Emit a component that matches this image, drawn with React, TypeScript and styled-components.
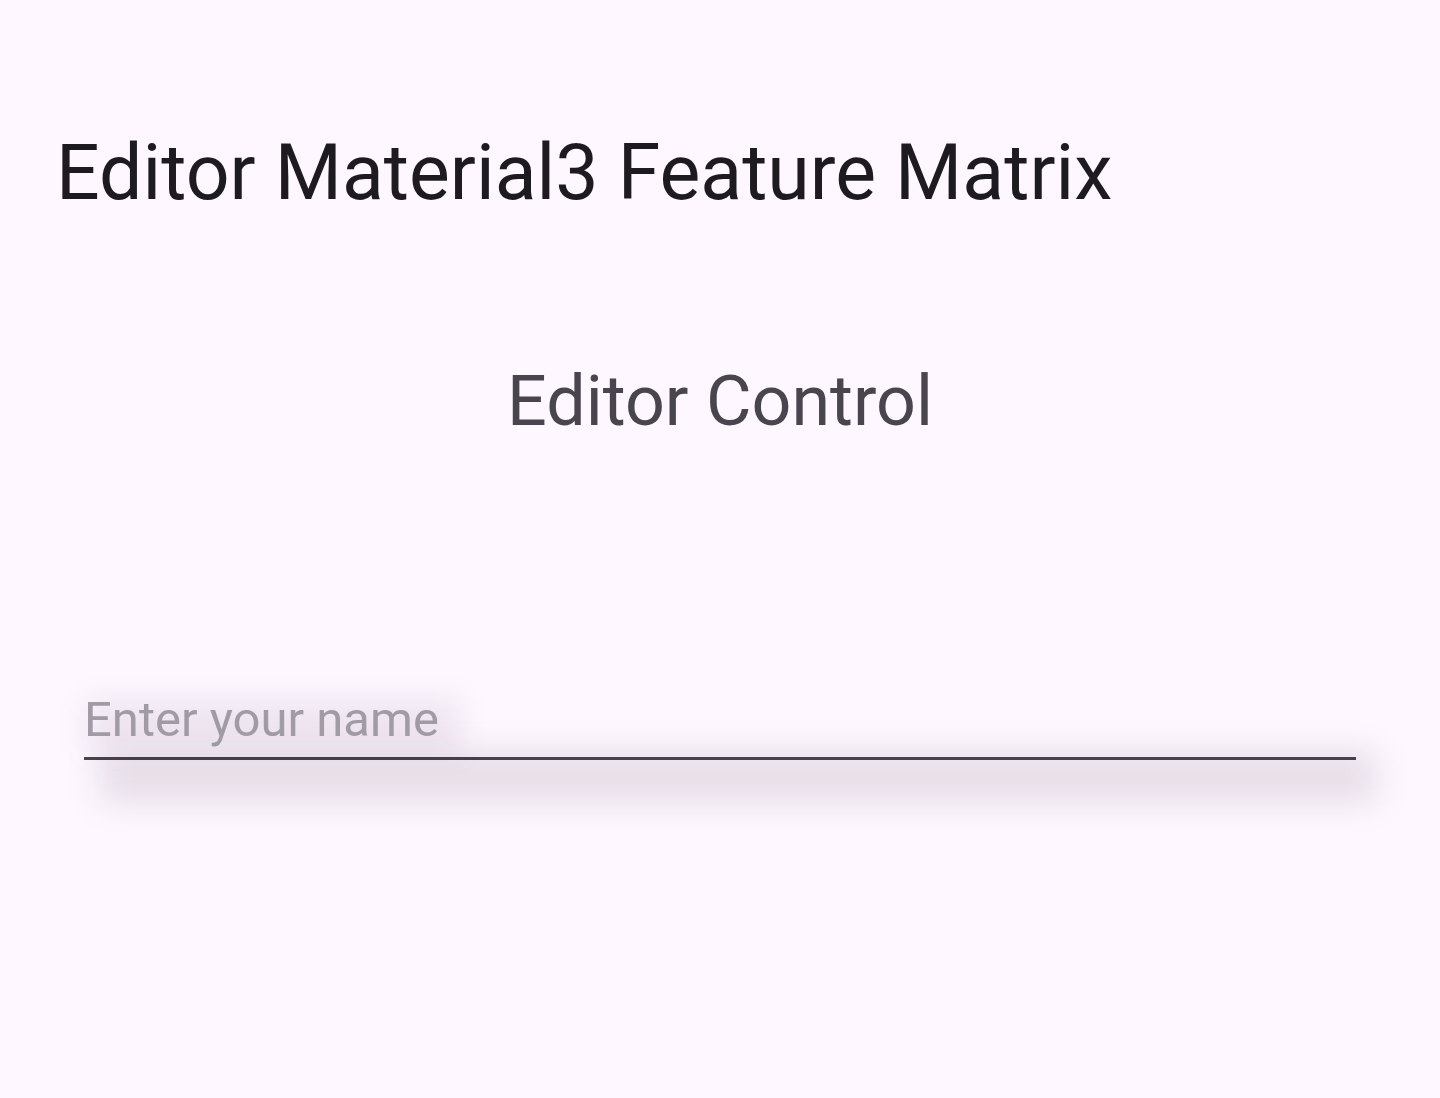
import React from 'react';
import styled, { createGlobalStyle } from 'styled-components';

const GlobalStyle = createGlobalStyle`
  html, body {
    margin: 0;
    padding: 0;
    background: #fef7ff;
    font-family: Roboto, "Liberation Sans", sans-serif;
  }
`;

const Page = styled.div`
  min-height: 1098px;
  background: #fef7ff;
  display: flex;
  flex-direction: column;
`;

const Header = styled.header`
  padding: 135px 0 0 56px;
`;

const Title = styled.h1`
  margin: 0;
  font-size: 77px;
  font-weight: 400;
  line-height: 1;
  color: #1d1b20;
`;

const Body = styled.main`
  display: flex;
  flex-direction: column;
  align-items: center;
  padding: 0 84px;
`;

const Heading = styled.h2`
  margin: 154px 0 0;
  font-size: 70px;
  font-weight: 400;
  line-height: 1;
  color: #49454f;
`;

const Field = styled.div`
  position: relative;
  align-self: stretch;
  margin-top: 255px;
  border-bottom: 3px solid #49454f;

  /* soft halo behind the hint text */
  &::before {
    content: '';
    position: absolute;
    left: 4px;
    top: 8px;
    width: 372px;
    height: 54px;
    background: rgba(40, 20, 50, 0.075);
    filter: blur(14px);
    pointer-events: none;
  }

  /* elevation shadow under the field */
  &::after {
    content: '';
    position: absolute;
    left: 16px;
    right: -20px;
    bottom: -45px;
    height: 50px;
    background: rgba(40, 20, 50, 0.11);
    filter: blur(16px);
    pointer-events: none;
  }
`;

const Input = styled.input`
  position: relative;
  z-index: 1;
  display: block;
  width: 100%;
  box-sizing: border-box;
  border: none;
  outline: none;
  background: transparent;
  padding: 0 0 9px;
  font-family: Roboto, "Liberation Sans", sans-serif;
  font-size: 49px;
  line-height: 57px;
  height: 66px;
  color: #1d1b20;

  &::placeholder {
    color: #a09ba5;
  }
`;

export default function App() {
  return (
    <>
      <GlobalStyle />
      <Page>
        <Header>
          <Title>Editor Material3 Feature Matrix</Title>
        </Header>
        <Body>
          <Heading>Editor Control</Heading>
          <Field>
            <Input placeholder="Enter your name" />
          </Field>
        </Body>
      </Page>
    </>
  );
}
